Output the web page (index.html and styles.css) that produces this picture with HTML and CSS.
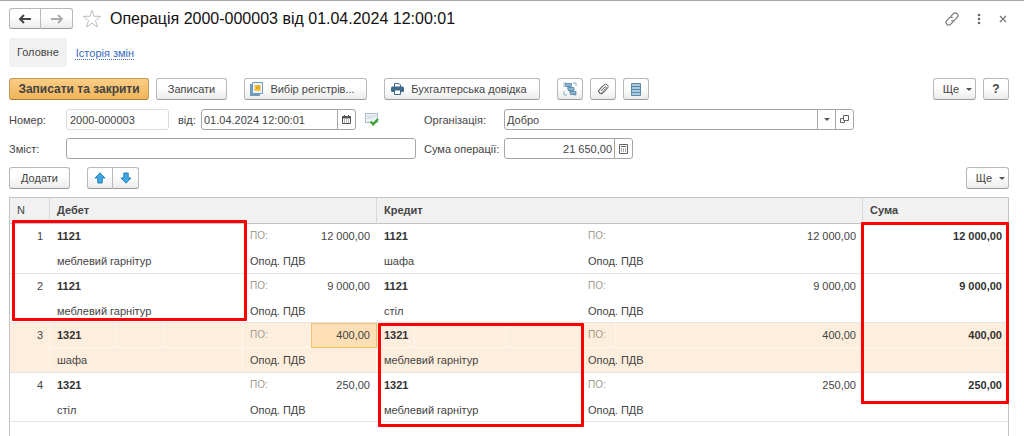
FILE: index.html
```html
<!DOCTYPE html>
<html lang="uk">
<head>
<meta charset="utf-8">
<title>Операція 2000-000003</title>
<link rel="stylesheet" href="styles.css">
</head>
<body>
<header class="titlebar">
  <div class="button-pair">
    <button class="btn nav-btn" type="button" aria-label="Назад"><svg width="14" height="10" viewBox="0 0 14 10"><path d="M13 5H3M6 1L2 5l4 4" fill="none" stroke="#444" stroke-width="2"/></svg></button>
    <button class="btn nav-btn" type="button" aria-label="Вперед"><svg width="14" height="10" viewBox="0 0 14 10"><path d="M1 5h10M8 1l4 4-4 4" fill="none" stroke="#aaa" stroke-width="1.800"/></svg></button>
  </div>
  <button class="bare star" type="button" aria-label="В обране"><svg width="20" height="20" viewBox="0 0 20 20"><path d="M10 1.300l2.100 6h6.600l-5.200 4.100 1.900 6.700-5.400-4-5.400 4 1.900-6.700-5.200-4.100h6.600z" fill="#fff" stroke="#b8bfc7"/></svg></button>
  <h1 class="title">Операція 2000-000003 від 01.04.2024 12:00:01</h1>
  <div class="window-tools">
    <button class="bare" type="button" aria-label="Посилання"><svg width="14" height="14" viewBox="0 0 14 14"><g fill="none" stroke="#777" stroke-width="1.200" stroke-linecap="round"><path d="M6 4.200l2.300-2.400a2.600 2.600 0 0 1 3.900 3.600L9.600 8.200a2.300 2.300 0 0 1-2.700.4"/><path d="M8 9.800l-2.300 2.400a2.600 2.600 0 0 1-3.900-3.600l2.600-2.800a2.300 2.300 0 0 1 2.700-.4"/></g></svg></button>
    <button class="bare" type="button" aria-label="Меню"><svg width="4" height="12" viewBox="0 0 4 12" fill="#666"><circle cx="2" cy="2" r="1.300"/><circle cx="2" cy="6" r="1.300"/><circle cx="2" cy="10" r="1.300"/></svg></button>
    <button class="bare" type="button" aria-label="Закрити"><svg width="8" height="8" viewBox="0 0 8 8"><path d="M1 1l6 6M7 1L1 7" stroke="#777" stroke-width="1.200"/></svg></button>
  </div>
</header>

<nav class="tabs">
  <a class="tab tab-current" href="#main">Головне</a>
  <a class="tab-link" href="#history">Історія змін</a>
</nav>

<div class="commands">
  <div class="group">
    <button class="btn btn-primary" type="button">Записати та закрити</button>
    <button class="btn btn-save" type="button">Записати</button>
  </div>
  <button class="btn btn-registers" type="button"><svg width="13" height="14" viewBox="0 0 13 14"><path d="M1 2v11h9" fill="none" stroke="#6f9ab8" stroke-width="2"/><path d="M2.500.5h10v11h-10z" fill="#eef5fa" stroke="#6f9ab8"/><path d="M4.500 3h6v6h-6z" fill="#f5c542"/><circle cx="8" cy="5.500" r="2" fill="#e2a71c"/></svg>Вибір регістрів...</button>
  <button class="btn btn-report" type="button"><svg width="13" height="12" viewBox="0 0 13 12"><path d="M3.500 4V.5h4.500l1.500 1.500v2" fill="#fff" stroke="#3f6a8c"/><rect y="3.500" width="13" height="5.500" rx="1.500" fill="#3f6a8c"/><path d="M3.500 7h6v4.500h-6z" fill="#fff" stroke="#3f6a8c"/></svg>Бухгалтерська довідка</button>
  <div class="group">
    <button class="btn btn-square" type="button" aria-label="Структура"><svg width="14" height="14" viewBox="0 0 14 14"><path d="M1 5V1h2M10 1h3v3M13 9v4h-2M4 13H1V9" fill="none" stroke="#8ab0c9"/><path d="M5 4.500V7h2M7 8.500V11h2" fill="none" stroke="#4f84a8"/><path d="M2.500 1.500h6v3h-6zM5 5.500h6v3H5zM7.500 9.500h5v3h-5z" fill="#8fb6d0" stroke="#4f84a8" stroke-width=".8"/></svg></button>
    <button class="btn btn-square" type="button" aria-label="Файли"><svg width="12" height="12" viewBox="0 0 12 12"><path d="M4 8l4-4.200a1 1 0 0 1 1.300 1.300L5.200 9.600a1.900 1.900 0 0 1-2.900-2.500L7 2.100a2.300 2.300 0 0 1 3.600 3L6.200 10a2.800 2.800 0 0 1-4.700-2.500L6 2.500" fill="none" stroke="#666"/></svg></button>
    <button class="btn btn-square" type="button" aria-label="Список"><svg width="10" height="13" viewBox="0 0 10 13"><path d="M.5.500h9v12h-9z" fill="#a9c9de" stroke="#5d8aa8"/><path d="M1 3.500h8M1 6.500h8M1 9.500h8" stroke="#5d8aa8"/></svg></button>
  </div>
  <div class="group push">
    <button class="btn btn-more" type="button">Ще <span class="caret"></span></button>
    <button class="btn btn-square btn-help" type="button">?</button>
  </div>
</div>

<form class="fields">
  <label for="number">Номер:</label>
  <div class="line">
    <input class="box number" id="number" value="2000-000003" readonly>
    <label for="date">від:</label>
    <div class="box combo date">
      <input id="date" value="01.04.2024 12:00:01">
      <button class="picker" type="button" aria-label="Календар"><svg width="9" height="9" viewBox="0 0 9 9"><path d="M.5 1.500h8v7h-8z" fill="#fff" stroke="#555"/><path d="M0 1h9v2.500H0zM2 0h1v1H2zM6 0h1v1H6z" fill="#555"/><path d="M2 5h5M2 7h5" stroke="#777" stroke-dasharray="1 1"/></svg></button>
    </div>
    <svg class="posted" width="14" height="13" viewBox="0 0 14 13" role="img" aria-label="Проведено"><path d="M.5.500h12v9H.5z" fill="#eef3f7" stroke="#a9bac8"/><path d="M2 3h9M2 5h6" stroke="#c5d2dc"/><path d="M5.500 8.500l2.800 2.800L13 6" fill="none" stroke="#3fa535" stroke-width="2.400"/></svg>
  </div>
  <label class="second" for="org">Організація:</label>
  <div class="box combo">
    <input id="org" value="Добро">
    <button class="picker" type="button" aria-label="Вибрати"><span class="caret"></span></button>
    <button class="picker" type="button" aria-label="Відкрити"><svg width="9" height="9" viewBox="0 0 9 9" fill="none" stroke="#666"><path d="M3.500.500h5v5h-5z"/><path d="M3 3.500H.5v4h4V6"/></svg></button>
  </div>
  <label for="content">Зміст:</label>
  <input class="box" id="content">
  <label class="second" for="sum">Сума операції:</label>
  <div class="box combo sum">
    <input id="sum" value="21 650,00">
    <button class="picker" type="button" aria-label="Калькулятор"><svg width="9" height="10" viewBox="0 0 9 10"><path d="M.5.500h8v9h-8z" fill="#fff" stroke="#666"/><path d="M2 2.500h5" stroke="#666"/><path d="M2 5h5M2 7h5" stroke="#555" stroke-dasharray="1 1"/></svg></button>
  </div>
</form>

<div class="commands table-commands">
  <button class="btn btn-add" type="button">Додати</button>
  <div class="button-pair">
    <button class="btn move-btn" type="button" aria-label="Вгору"><svg width="12" height="12" viewBox="0 0 12 12"><path d="M6 .8L11 6H8.200v5H3.800V6H1z" fill="#3fa9e6" stroke="#2b7fb5"/></svg></button>
    <button class="btn move-btn" type="button" aria-label="Вниз"><svg width="12" height="12" viewBox="0 0 12 12"><path d="M6 11.200L1 6h2.800V1h4.400v5H11z" fill="#3fa9e6" stroke="#2b7fb5"/></svg></button>
  </div>
  <button class="btn btn-more push" type="button">Ще <span class="caret"></span></button>
</div>

<main class="grid-area">
  <table class="entries">
    <colgroup><col class="c-n"><col class="c-acc"><col class="c-a"><col class="c-b"><col class="c-po"><col class="c-amt"><col class="c-cracc"><col class="c-cra"><col class="c-crb"><col class="c-crpo"><col><col class="c-sum"></colgroup>
    <thead><tr><th class="plain">N</th><th colspan="5">Дебет</th><th colspan="5">Кредит</th><th>Сума</th></tr></thead>
    <tbody>
      <tr class="first"><td class="num" rowspan="2">1</td><td class="acc" colspan="3">1121</td><td class="po">ПО:</td><td class="num">12 000,00</td><td class="acc" colspan="3">1121</td><td class="po">ПО:</td><td class="num">12 000,00</td><td class="num total">12 000,00</td></tr>
      <tr class="last"><td colspan="3">меблевий гарнітур</td><td colspan="2">Опод. ПДВ</td><td colspan="3">шафа</td><td colspan="2">Опод. ПДВ</td><td></td></tr>
      <tr class="first"><td class="num" rowspan="2">2</td><td class="acc" colspan="3">1121</td><td class="po">ПО:</td><td class="num">9 000,00</td><td class="acc" colspan="3">1121</td><td class="po">ПО:</td><td class="num">9 000,00</td><td class="num total">9 000,00</td></tr>
      <tr class="last"><td colspan="3">меблевий гарнітур</td><td colspan="2">Опод. ПДВ</td><td colspan="3">стіл</td><td colspan="2">Опод. ПДВ</td><td></td></tr>
      <tr class="first selected"><td class="num" rowspan="2">3</td><td class="acc">1321</td><td></td><td></td><td class="po">ПО:</td><td class="num active">400,00</td><td class="acc">1321</td><td></td><td></td><td class="po">ПО:</td><td class="num">400,00</td><td class="num total">400,00</td></tr>
      <tr class="last selected"><td colspan="3">шафа</td><td colspan="2">Опод. ПДВ</td><td colspan="3">меблевий гарнітур</td><td colspan="2">Опод. ПДВ</td><td></td></tr>
      <tr class="first"><td class="num" rowspan="2">4</td><td class="acc" colspan="3">1321</td><td class="po">ПО:</td><td class="num">250,00</td><td class="acc" colspan="3">1321</td><td class="po">ПО:</td><td class="num">250,00</td><td class="num total">250,00</td></tr>
      <tr class="last"><td colspan="3">стіл</td><td colspan="2">Опод. ПДВ</td><td colspan="3">меблевий гарнітур</td><td colspan="2">Опод. ПДВ</td><td></td></tr>
    </tbody>
  </table>
  <div class="mark mark-debit"></div>
  <div class="mark mark-credit"></div>
  <div class="mark mark-sum"></div>
</main>
</body>
</html>
```

FILE: styles.css
```css
* { box-sizing: border-box; }
body {
  margin: 0;
  min-height: 100vh;
  display: flex;
  flex-direction: column;
  padding: 7px 15px 0 9px;
  border-top: 1px solid #a8a8a8;
  background: #fff;
  color: #444;
  font: 11px/16px "Liberation Sans", Arial, sans-serif;
}
button, input { font: inherit; color: inherit; }
svg { display: block; flex: none; }

.titlebar { display: flex; align-items: center; height: 21px; }
.title { margin: 0 0 0 8px; font-size: 16px; line-height: 20px; font-weight: 400; color: #111; }
.bare { display: flex; padding: 0; border: 0; background: none; }
.star { margin-left: 9px; }
.window-tools { display: flex; align-items: center; gap: 18px; margin-left: auto; padding-right: 2px; }

.btn {
  display: flex;
  align-items: center;
  justify-content: center;
  gap: 7px;
  height: 22px;
  padding: 0;
  border: 1px solid #b8b8b8;
  border-bottom-color: #999;
  border-radius: 3px;
  background: linear-gradient(#fff 40%, #ececec);
  white-space: nowrap;
}
.button-pair { display: flex; }
.button-pair .btn:first-child { border-radius: 3px 0 0 3px; }
.button-pair .btn:last-child { border-left: 0; border-radius: 0 3px 3px 0; }
.nav-btn { width: 32px; height: 21px; }
.move-btn { width: 26px; }

.tabs { display: flex; align-items: center; gap: 9px; margin-top: 9px; height: 29px; }
.tab { padding: 6px 8px 7px; border-radius: 3px; background: #f1f1f1; color: #444; text-decoration: none; }
.tab-link { color: #3568c0; text-decoration: underline dotted; text-underline-offset: 2px; }

.commands { display: flex; gap: 17px; margin-top: 11px; }
.table-commands { margin-top: 8px; }
.group { display: flex; gap: 7px; }
.push { margin-left: auto; }
.btn-primary { width: 140px; border-color: #c29a58; border-bottom-color: #a5803f; background: linear-gradient(#fbcd85, #f0b558); font-size: 12px; font-weight: 700; }
.btn-save { width: 71px; }
.btn-registers { width: 123px; padding-right: 6px; }
.btn-report { width: 156px; padding-right: 6px; }
.btn-square { width: 26px; }
.btn-more { width: 43px; padding-left: 6px; }
.btn-add { width: 61px; }
.btn-help { font-size: 12px; font-weight: 700; }
.caret { border: 3px solid transparent; border-top-color: #555; border-bottom: 0; }

.fields {
  display: grid;
  grid-template-columns: 57px minmax(0, 350px) 88px minmax(0, 350px);
  row-gap: 8px;
  align-items: center;
  margin-top: 9px;
}
.second { padding-left: 8px; white-space: nowrap; }
.line { display: flex; align-items: center; gap: 9px; }
.line label { width: 14px; white-space: nowrap; }
.box { width: 100%; height: 21px; padding: 0 3px; border: 1px solid #a6a6a6; border-radius: 3px; background: #fff; }
.number { width: 103px; border-color: #dcdcdc; }
.combo { display: flex; padding: 0; }
.combo input { flex: 1; min-width: 0; padding: 0 2px; border: 0; background: none; }
.date { width: 155px; }
.sum { width: 129px; }
.sum input { text-align: right; }
.picker { display: flex; align-items: center; justify-content: center; width: 18px; padding: 0; border: 0; border-left: 1px solid #a6a6a6; background: none; }

.grid-area { position: relative; flex: 1; margin-top: 8px; border: 1px solid #c4c4c4; border-bottom: 0; }
.entries { width: 100%; table-layout: fixed; border-collapse: separate; border-spacing: 0; }
.entries th { height: 26px; padding: 0 7px 2px; border-right: 1px solid #d9d9d9; border-bottom: 1px solid #c4c4c4; background: #f1f1f1; text-align: left; }
.entries th:last-child { border-right: 0; }
.entries .plain { font-weight: 400; }
.c-n { width: 40px; }
.c-acc { width: 67px; }
.c-a { width: 48px; }
.c-b { width: 78px; }
.c-po { width: 68px; }
.c-amt { width: 66px; }
.c-cracc { width: 38px; }
.c-cra { width: 91px; }
.c-crb { width: 75px; }
.c-crpo { width: 35px; }
.c-sum { width: 145px; }
.entries td { height: 25px; padding: 0 7px; white-space: nowrap; }
.entries tr:nth-child(4n) td { height: 24px; }
.entries .first td { padding-bottom: 2px; }
.entries .last td, .entries td[rowspan] { border-bottom: 1px solid #e6e6e6; }
.entries td[rowspan] { padding: 4px 7px; vertical-align: top; }
.entries .num { text-align: right; }
.entries .acc, .entries .total { font-weight: 700; color: #333; }
.entries .total { padding-right: 6px; }
.entries .po { color: #a09c8c; font-size: 10px; }
.entries .selected td { background: #feeedd; box-shadow: inset -1px 0 #fff8ee; }
.entries .first.selected td:not([rowspan]) { box-shadow: inset -1px -1px #fff8ee; }
.entries .first.selected td.active:not([rowspan]) { background: #fddfb5; box-shadow: inset 0 0 0 1px #f5bd66; }

.mark { position: absolute; border: 3px solid #f00; border-radius: 1px; }
.mark-debit { left: 2px; top: 22px; width: 235px; height: 101px; }
.mark-credit { left: 368px; top: 125px; width: 206px; height: 104px; }
.mark-sum { right: -1px; top: 24px; width: 148px; height: 182px; }
```
